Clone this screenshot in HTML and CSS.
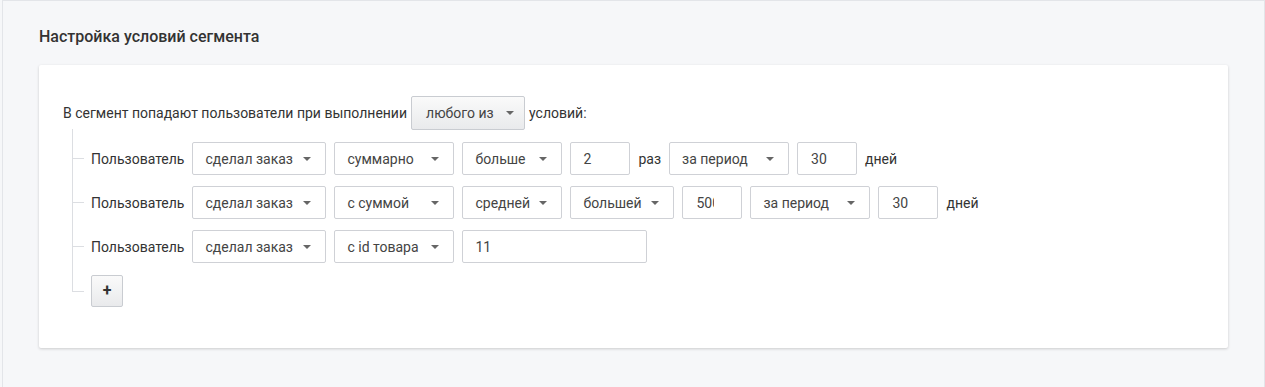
FILE: index.html
```html
<!doctype html>
<html>
<head>
<meta charset="utf-8">
<title>Настройка условий сегмента</title>
<link rel="stylesheet" href="styles.css">
</head>
<body>
<div class="page">
	<h2 class="title">Настройка условий сегмента</h2>
	<div class="card">
		<div class="head">
			<span>В сегмент попадают пользователи при выполнении</span>
			<div class="btn btn-drop">любого из <i class="caret"></i></div>
			<span>условий:</span>
		</div>
		<ul class="tree">
			<li>
				<span class="lbl">Пользователь</span>
				<div class="sel w134">сделал заказ <i class="caret"></i></div>
				<div class="sel w120">суммарно <i class="caret"></i></div>
				<div class="sel w100">больше <i class="caret"></i></div>
				<div class="fld w60">2</div>
				<span>раз</span>
				<div class="sel w120">за период <i class="caret"></i></div>
				<div class="fld w60 num">30</div>
				<span>дней</span>
			</li>
			<li>
				<span class="lbl">Пользователь</span>
				<div class="sel w134">сделал заказ <i class="caret"></i></div>
				<div class="sel w120">с суммой <i class="caret"></i></div>
				<div class="sel w100">средней <i class="caret"></i></div>
				<div class="sel w104">большей <i class="caret"></i></div>
				<div class="fld w60 num"><span class="clip">500</span></div>
				<div class="sel w120">за период <i class="caret"></i></div>
				<div class="fld w60 num">30</div>
				<span>дней</span>
			</li>
			<li>
				<span class="lbl">Пользователь</span>
				<div class="sel w134">сделал заказ <i class="caret"></i></div>
				<div class="sel w120">с id товара <i class="caret"></i></div>
				<div class="fld w185">11</div>
			</li>
			<li class="last">
				<div class="btn btn-add">+</div>
			</li>
		</ul>
	</div>
</div>
</body>
</html>
```

FILE: styles.css
```css
*{margin:0; padding:0; box-sizing:border-box; list-style:none;}
body{background:#f6f7f9; font-family:Roboto, "Liberation Sans", sans-serif; font-size:14px; color:#333;}
.page{margin-left:2px; height:387px; border:1px solid #e3e5e9; border-bottom:0; padding:0 36px;}
.title{font-size:16px; font-weight:500; color:#333; line-height:19px; padding-top:26px; height:64px;}
.card{background:#fff; border-radius:2px; box-shadow:0 1px 3px rgba(0,0,0,.18); padding:31px 24px 40px; height:283px;}

.head{display:flex; align-items:center; gap:4px; height:33px;}

.btn{display:flex; align-items:center; border:1px solid #c9ccd1; border-radius:2px; background:linear-gradient(#fafafa,#e9eaec); color:#444;}
.btn-drop{width:114px; height:34px; padding:0 0 0 14px;}
.btn-drop .caret{margin-left:auto; margin-right:10px;}
.btn-add{width:32px; height:32px; justify-content:center; font-size:16px; font-weight:700; color:#333; line-height:1;}

.tree{margin-left:9px;}
.tree li{position:relative; display:flex; align-items:center; gap:8px; padding:11px 0 0 19px;}
.tree li:first-child{padding-top:13px;}
.tree li::before{content:""; position:absolute; left:0; top:0; bottom:0; border-left:1px solid #dcdee2;}
.tree li::after{content:""; position:absolute; left:0; top:27px; width:12px; border-top:1px solid #dcdee2;}
.tree li:first-child::after{top:29px;}
.tree li.last{padding-top:12px;}
.tree li.last::before{bottom:auto; height:28px;}
.tree li.last::after{top:28px;}

.lbl{min-width:93px; color:#333;}
.sel,.fld{display:flex; align-items:center; height:33px; border:1px solid #cfd1d6; border-radius:2px; background:#fff; color:#444; padding-left:12px; white-space:nowrap;}
.sel .caret{margin-left:auto; margin-right:14px;}
.fld.num{padding-left:13px;}
.clip{display:block; width:18px; overflow:hidden;}

.caret{display:block; width:0; height:0; border-left:4px solid transparent; border-right:4px solid transparent; border-top:4px solid #666;}

.w60{width:60px;}
.w100{width:100px;}
.w104{width:104px;}
.w120{width:120px;}
.w134{width:134px;}
.w185{width:185px;}
```
